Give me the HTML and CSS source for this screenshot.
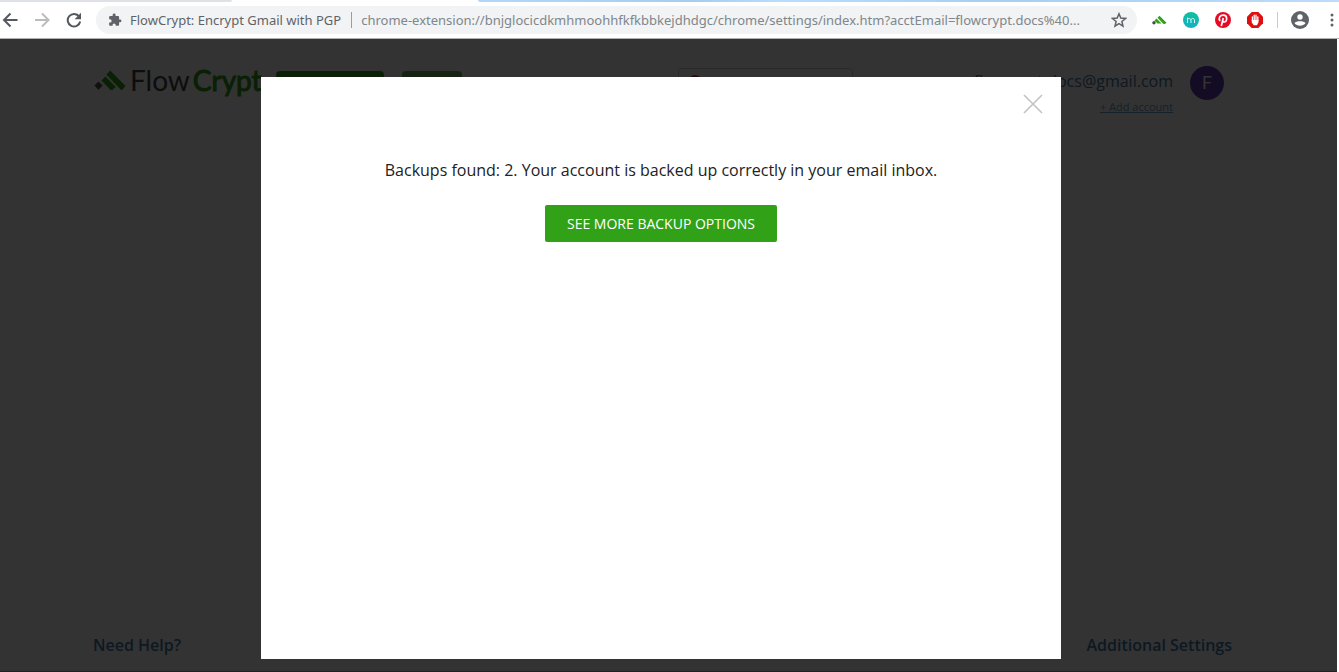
FILE: index.html
```html
<!DOCTYPE html>
<html lang="en">
<head>
<meta charset="utf-8">
<title>FlowCrypt: Encrypt Gmail with PGP</title>
<link rel="stylesheet" href="styles.css">
</head>
<body>
<div class="tabs"><span class="tab-inactive"></span><span class="tab-active"></span><span class="tab-rest"></span></div>
<nav class="toolbar" aria-label="Browser toolbar">
  <div class="nav-buttons">
    <button class="icon-button" aria-label="Back"><svg viewBox="0 0 16 16"><path d="M15.500 8H2.500M8.500 1.500L2 8l6.500 6.500" fill="none" stroke="#55595e" stroke-width="2"/></svg></button>
    <button class="icon-button" aria-label="Forward"><svg viewBox="0 0 16 16"><path d="M1 8h13M8 1.500L14.500 8 8 14.500" fill="none" stroke="#babcbe" stroke-width="2"/></svg></button>
    <button class="icon-button" aria-label="Reload"><svg viewBox="0 0 16 16"><path d="M13.200 4.600A6.300 6.300 0 1 0 14.200 9.500" fill="none" stroke="#55595e" stroke-width="2"/><path d="M15 .8v6.400H8.600z" fill="#55595e"/></svg></button>
  </div>
  <div class="omnibox">
    <svg class="icon-small" viewBox="0 0 24 24"><path fill="#5f6368" d="M20.500 11H19V7c0-1.100-.9-2-2-2h-4V3.500a2.500 2.500 0 0 0-5 0V5H4c-1.100 0-2 .9-2 2v3.800h1.500a2.700 2.700 0 0 1 0 5.400H2V20c0 1.100.9 2 2 2h3.800v-1.500a2.700 2.700 0 0 1 5.400 0V22H17c1.100 0 2-.9 2-2v-4h1.500a2.500 2.500 0 0 0 0-5z"/></svg>
    <span class="site-name">FlowCrypt: Encrypt Gmail with PGP</span>
    <span class="url">chrome-extension://bnjglocicdkmhmoohhfkfkbbkejdhdgc/chrome/settings/index.htm?acctEmail=flowcrypt.docs%40...</span>
    <button class="icon-button" aria-label="Bookmark this page"><svg viewBox="0 0 16 16"><path d="M8 1.800l1.800 4.300 4.700.4-3.600 3 1.100 4.600L8 11.700l-4 2.400 1.100-4.600-3.600-3 4.700-.4z" fill="none" stroke="#5f6368" stroke-width="1.500"/></svg></button>
  </div>
  <div class="extensions">
    <button class="icon-button" aria-label="FlowCrypt"><svg viewBox="0 0 16 16"><circle cx="3" cy="10.700" r="1.700" fill="#4b4b4b"/><path d="M3.500 8.500l2-2 5 5H6.500zM6.500 5.700l2-2 7 7-1.700 1.300H12.500z" fill="#31a217"/></svg></button>
    <button class="icon-button" aria-label="Mailvelope"><svg viewBox="0 0 16 16"><defs><linearGradient id="teal" x2="0" y2="1"><stop stop-color="#0fbf9b"/><stop offset="1" stop-color="#16b0c8"/></linearGradient></defs><circle cx="8" cy="8" r="8" fill="url(#teal)"/><path d="M4.500 11V5.500m0 2.500c0-2 3.500-2 3.500 0v3m0-3c0-2 3.500-2 3.500 0v3" fill="none" stroke="#d8f7f4"/></svg></button>
    <button class="icon-button" aria-label="Pinterest"><svg viewBox="0 0 16 16"><circle cx="8" cy="8" r="8" fill="#e60b25"/><path d="M5 9C3 5.500 5.300 3.200 8.300 3.200c4.500 0 4.200 6.800.8 6.800-1.300 0-1.600-1-1.600-1M8.300 6L6.300 14" fill="none" stroke="#fff" stroke-width="1.700"/></svg></button>
    <button class="icon-button" aria-label="AdBlock"><svg viewBox="0 0 16 16"><path d="M4.700 0h6.600L16 4.700v6.600L11.300 16H4.700L0 11.300V4.700z" fill="#e00e0e"/><path d="M5.400 9V4.800M7.200 8V3.200M9 8V3.200M10.800 9V4.800" stroke="#fff" stroke-width="1.300" stroke-linecap="round"/><path d="M4.800 8h6.600v2.500L10 13.200H6.700L4.800 10.500z" fill="#fff"/></svg></button>
    <span class="divider"></span>
    <button class="icon-button profile" aria-label="Profile"><svg viewBox="0 0 18 18"><circle cx="9" cy="9" r="9" fill="#5f6368"/><circle cx="9" cy="6" r="2.700" fill="#fff"/><path d="M3.500 12.300C5 9.700 13 9.700 14.500 12.300 12 15.600 6 15.600 3.500 12.300z" fill="#fff"/></svg></button>
    <button class="icon-button menu" aria-label="Menu"><svg viewBox="0 0 4 16"><g fill="#5f6368"><circle cx="2" cy="3" r="1.500"/><circle cx="2" cy="8" r="1.500"/><circle cx="2" cy="13" r="1.500"/></g></svg></button>
  </div>
</nav>
<div class="viewport">
  <main class="page">
    <header class="header">
      <div class="logo">
        <svg class="logo-mark" viewBox="0 0 32 20"><path d="M4.500 12L8 15.500 4.500 19.300 1 15.500z" fill="#505050" stroke="#505050" stroke-linejoin="round"/><path d="M7.500 10.500l4-4L21.800 17l-4 3.300h-1zM12.400 4.600L16.200.5 31.500 16l-3.500 4h-1z" fill="#31a217"/></svg>
        <span class="logo-text">Flow<span class="logo-green">Crypt</span></span>
      </div>
      <div class="actions"><span class="action action-primary"></span><span class="action action-secondary"></span></div>
      <div class="status"><span class="status-dot"></span></div>
      <div class="account">
        <a class="email" href="#">flowcrypt.docs@gmail.com</a>
        <a class="add-account" href="#">+ Add account</a>
      </div>
      <span class="avatar">F</span>
    </header>
    <footer class="footer"><a class="footer-link" href="#">Need Help?</a><a class="footer-link" href="#">Additional Settings</a></footer>
  </main>
  <div class="overlay">
    <section class="dialog" role="dialog" aria-label="Backups">
      <button class="close" aria-label="Close"><svg viewBox="0 0 20 20"><path d="M1 1l18 18M19 1L1 19" stroke="#c4c4c4" stroke-width="1.700"/></svg></button>
      <p class="message">Backups found: 2. Your account is backed up correctly in your email inbox.</p>
      <button class="primary-button">SEE MORE BACKUP OPTIONS</button>
    </section>
  </div>
</div>
</body>
</html>
```
FILE: styles.css
```css
* { box-sizing: border-box; }
body { margin: 0; height: 100vh; display: flex; flex-direction: column; background: #fff; font-family: "Open Sans", "Noto Sans", sans-serif; overflow: hidden; }
button { border: 0; padding: 0; background: none; font: inherit; cursor: pointer; }
svg { display: block; width: 100%; height: 100%; }

.tabs { display: flex; height: 2px; flex: none; }
.tab-inactive { width: 232px; background: #dee1e6; border-radius: 0 0 2px 0; }
.tab-active { width: 246px; }
.tab-rest { flex: 1; background: linear-gradient(90deg, #b5d6fa, #a8cbf0 25%, #bbdcfd 35%, #a9cdf3 60%, #bcdcf9); border-radius: 0 0 0 2px; }

.toolbar { display: flex; align-items: center; flex: none; height: 37px; padding: 0 5px 0 2px; border-bottom: 1px solid #b0b2b2; }
.nav-buttons { display: flex; gap: 16px; margin-right: 14px; }
.icon-button { flex: none; width: 16px; height: 16px; }
.omnibox { display: flex; align-items: center; flex: 1; min-width: 0; height: 28px; padding: 0 10px 0 12px; border-radius: 14px; background: #f1f3f4; font-family: "Noto Sans", sans-serif; font-size: 13px; line-height: 16px; white-space: nowrap; }
.icon-small { flex: none; width: 14px; height: 14px; margin-right: 8px; }
.site-name { color: #5f6368; padding-right: 10px; border-right: 1px solid #9a9da1; }
.url { flex: 1; min-width: 0; overflow: hidden; padding-left: 9px; color: #80868b; }
.extensions { display: flex; align-items: center; gap: 16px; margin-left: 14px; }
.divider { width: 1px; height: 16px; margin: 0 -3px 0 -2px; background: #c8cacc; }
.profile { width: 18px; height: 18px; }
.menu { width: 4px; margin-left: 5px; }

.viewport { position: relative; flex: 1; min-height: 0; margin-right: 2px; }
.page { display: flex; flex-direction: column; justify-content: space-between; height: 100%; padding: 27px 105px 16px 93px; border-bottom: 1px solid #aaa; }
.header { display: flex; align-items: flex-start; padding-right: 8px; }
.logo { display: flex; align-items: flex-start; gap: 4px; width: 183px; }
.logo-mark { width: 32px; height: 20px; margin: 4px 0 0 1px; flex: none; }
.logo-text { font-family: Lato, sans-serif; font-size: 28px; line-height: 28px; color: #444; }
.logo-green { margin-left: 3px; color: #31a217; -webkit-text-stroke: 1px #31a217; }
.actions { display: flex; gap: 18px; margin-top: 5px; }
.action { height: 28px; border-radius: 4px; }
.action-primary { width: 108px; background: #31a217; }
.action-secondary { width: 60px; background: #70b060; }
.status { width: 175px; height: 36px; margin: 2px auto 0 216px; padding: 6px 9px; border: 1px solid #ccc; border-radius: 4px; }
.status-dot { display: block; width: 14px; height: 14px; border-radius: 50%; background: #d32f2f; }
.account { display: flex; flex-direction: column; align-items: flex-end; gap: 8px; padding-top: 5px; }
.email { font-size: 16px; line-height: 20px; font-weight: 500; color: #487aad; text-decoration: none; }
.add-account { font-size: 11px; line-height: 16px; color: #6d9fce; }
.avatar { width: 34px; height: 34px; margin-left: 17px; border-radius: 50%; background: #673ab7; color: #fff; font-family: Roboto, sans-serif; font-size: 18px; line-height: 34px; text-align: center; }
.footer { display: flex; justify-content: space-between; }
.footer-link { font-size: 16px; line-height: 20px; font-weight: 600; color: #487aad; text-decoration: none; }

.overlay { position: absolute; inset: 0; display: flex; justify-content: center; padding: 38px 15px 13px 0; background: rgba(0, 0, 0, .8); }
.dialog { position: relative; display: flex; flex-direction: column; align-items: center; width: 800px; max-width: 100%; padding-top: 82px; background: #fff; }
.close { position: absolute; top: 17px; right: 18px; width: 20px; height: 20px; }
.message { margin: 0 0 24px; font-size: 16px; line-height: 22px; color: #222; }
.primary-button { padding: 8px 22px; border-radius: 2px; background: #31a217; color: #fff; font-size: 14px; line-height: 21px; }
```
